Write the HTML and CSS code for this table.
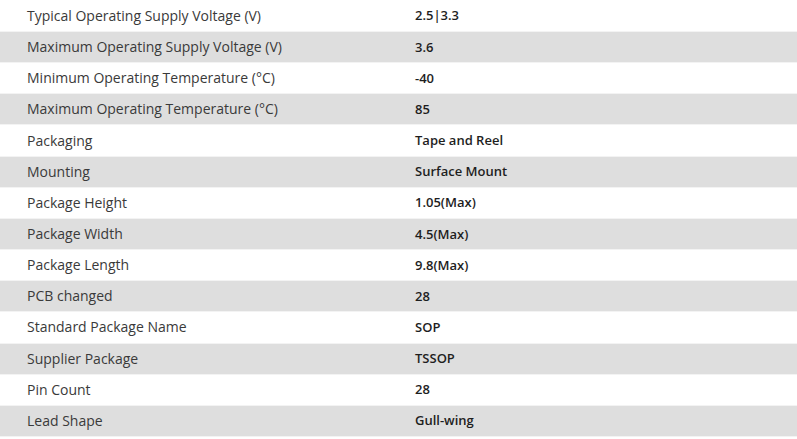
FILE: index.html
```html
<!DOCTYPE html>
<html>
<head>
<meta charset="utf-8">
<link rel="stylesheet" href="styles.css">
</head>
<body>
<div class="specs">
  <div class="row"><div class="label">Typical Operating Supply Voltage (V)</div><div class="value">2.5|3.3</div></div>
  <div class="row alt"><div class="label">Maximum Operating Supply Voltage (V)</div><div class="value">3.6</div></div>
  <div class="row"><div class="label">Minimum Operating Temperature (°C)</div><div class="value">-40</div></div>
  <div class="row alt"><div class="label">Maximum Operating Temperature (°C)</div><div class="value">85</div></div>
  <div class="row"><div class="label">Packaging</div><div class="value">Tape and Reel</div></div>
  <div class="row alt"><div class="label">Mounting</div><div class="value">Surface Mount</div></div>
  <div class="row"><div class="label">Package Height</div><div class="value">1.05(Max)</div></div>
  <div class="row alt"><div class="label">Package Width</div><div class="value">4.5(Max)</div></div>
  <div class="row"><div class="label">Package Length</div><div class="value">9.8(Max)</div></div>
  <div class="row alt"><div class="label">PCB changed</div><div class="value">28</div></div>
  <div class="row"><div class="label">Standard Package Name</div><div class="value">SOP</div></div>
  <div class="row alt"><div class="label">Supplier Package</div><div class="value">TSSOP</div></div>
  <div class="row"><div class="label">Pin Count</div><div class="value">28</div></div>
  <div class="row alt"><div class="label">Lead Shape</div><div class="value">Gull-wing</div></div>
</div>
</body>
</html>
```
FILE: styles.css
```css
html, body {
  margin: 0;
  padding: 0;
  background: #ffffff;
}
body {
  font-family: "Open Sans", "Noto Sans", sans-serif;
  font-size: 13px;
  color: #333333;
  overflow: hidden;
}
.specs {
  padding-top: 0.83px;
}
.row {
  display: grid;
  grid-template-columns: 388px 1fr;
  align-items: center;
  height: 29.17px;
  padding-bottom: 1px;
  border-bottom: 1px solid #f3f3f3;
  padding-left: 27px;
  background-clip: padding-box;
}
.row.alt {
  background-color: #dedede;
}
.label {
  font-size: 14px;
  color: #3a3a3a;
}
.value {
  font-weight: 600;
  color: #1e1e1e;
}
```
